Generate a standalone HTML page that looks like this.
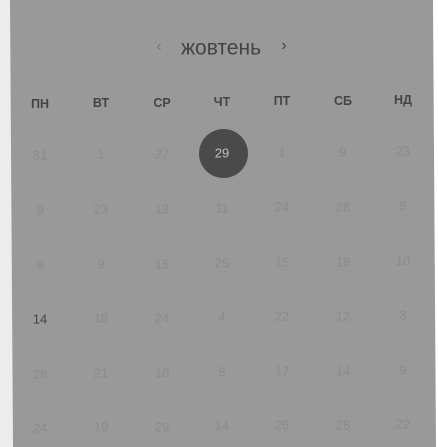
<!DOCTYPE html>
<html><head><meta charset="utf-8"><style>
html,body{margin:0;padding:0;width:438px;height:447px;overflow:hidden;background:#fff;font-family:"Liberation Sans",sans-serif}
#wrap{position:relative;width:438px;height:447px;overflow:hidden;background:#fff}
#strip{position:absolute;left:0;top:0;width:20px;height:447px;background:#ececec}
#p{position:absolute;left:0;top:0;width:438px;height:447px;background:#999;clip-path:polygon(10px 0,433px 0,436px 447px,13px 447px)}
.t{position:absolute;transform:translate(-50%,-50%);white-space:nowrap;line-height:1}
.w{font-size:12.5px;font-weight:bold;color:#444}
.n{font-size:13px;color:#8b8b8b}
</style></head><body>
<div id="wrap">
<div id="strip"></div>
<div id="p">
<div class="t" style="left:221px;top:48px;font-size:21px;color:#444">жовтень</div>
<div class="t" style="left:159px;top:47px;font-size:16px;color:#777">‹</div>
<div class="t" style="left:284px;top:46px;font-size:16px;color:#444">›</div>
</div>
</div>
<script>
var cols=[40,101,162,222,282,343,403];
var rows=[102,153,208,263,317,372,426];
var wd=["ПН","ВТ","СР","ЧТ","ПТ","СБ","НД"];
var d=[[31,1,27,29,1,9,23],[9,23,19,11,24,28,5],[9,9,15,25,15,18,10],[14,18,24,4,22,12,3],[28,21,10,5,17,14,9],[24,19,29,14,26,28,22]];
function Y(r,c){return rows[r]-(cols[c]-222)*0.009;}
var p=document.getElementById('p'),h='';
for(var i=0;i<7;i++)h+='<div class="t w" style="left:'+cols[i]+'px;top:'+Y(0,i)+'px">'+wd[i]+'</div>';
h+='<div style="position:absolute;left:'+(223.5-24.5)+'px;top:'+(153.5-24.5)+'px;width:49px;height:49px;border-radius:50%;background:#4a4a4a"></div>';
for(var r=0;r<6;r++)for(var c=0;c<7;c++){var s='';if(r==0&&c==3)s='color:#bdbdbd;';if(r==3&&c==0)s='color:#444;';
h+='<div class="t n" style="'+s+'left:'+cols[c]+'px;top:'+Y(r+1,c)+'px">'+d[r][c]+'</div>';}
p.insertAdjacentHTML('beforeend',h);
</script>
</body></html>
